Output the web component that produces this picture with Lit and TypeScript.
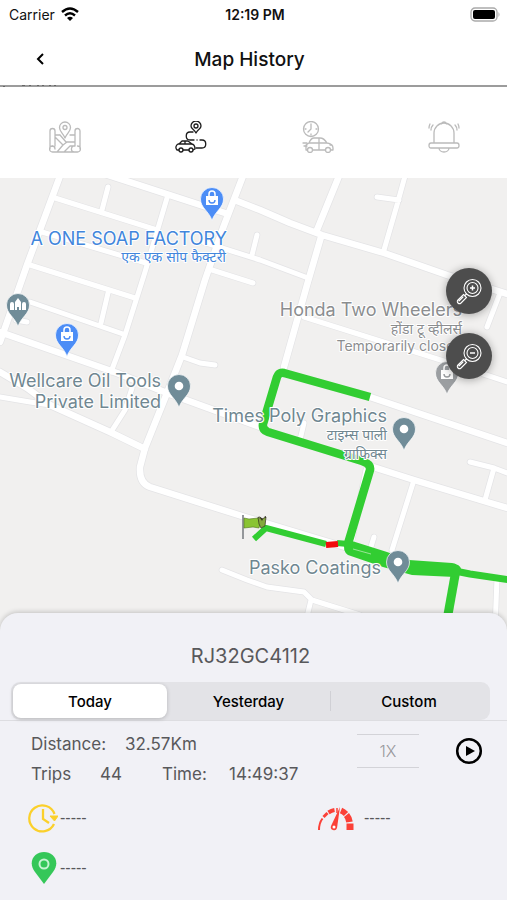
import { LitElement, html, svg, css } from "lit";
import { customElement, state } from "lit/decorators.js";

const minorRoads = [
  "M55 198L157 230", "M42 232L146 263", "M30 265L135 298", "M30 302L123 334",
  "M167 198L145 272L125 335L111 372", "M108 187L102 210", "M203 242L260 260L308 278",
  "M212 270L253 283", "M257 235L252 255", "M183 357L200 363L215 365", "M108 293L101 323",
  "M16 320L27 322", "M0 397L30 402L50 405", "M132 388L125 410L111 432",
  "M405 176L397 205L384 250", "M377 197L399 200", "M304 317L447 362L507 382",
  "M500 293L487 327", "M470 462L494 468L507 473", "M494 468L485 500",
  "M414 480L392 550", "M374 537L370 550", "M304 423L300 440", "M366 470L352 540",
  "M222 570L247 580L267 587L304 592L312 600L360 615", "M311 600L305 625", "M497 578L495 630",
];
const mainRoads = [
  "M60 176L27 265L0 342", "M0 332L117 373L167 393L260 427", "M105 174L228 214",
  "M243 176L223 228L205 280L182 355L167 393L145 448L140 467Q139 483 150 487L245 517",
  "M237 201L260 210L290 223L322 235L384 253L447 275L507 294",
  "M339 176L317 230M321 237L307 285L284 367", "M0 372L27 388L50 405L110 432L145 449",
  "M370 397L507 443", "M370 466L414 480L487 502L507 508", "M245 517L345 547",
];

const bag = svg`<path d="M-6 -3H6V6H-6Z" fill="#fff"/><path d="M-3 -3V-5a3 3 0 0 1 6 0V-3" fill="none" stroke="#fff" stroke-width="1.5"/><path d="M-3 1a3 3 0 0 0 6 0" fill="none" stroke="currentColor" stroke-width="1.4"/>`;
const dot = svg`<circle r="4.3" fill="#fff"/>`;
const towers = svg`<path d="M-8 5V-1a2 2 0 0 1 4 0V5ZM4 5V-1a2 2 0 0 1 4 0V5ZM-3 5V-3L0 -7L3 -3V5H1V2H-1V5Z" fill="#fff"/>`;

const pins = [
  { x: 212, y: 199, color: "#4c8df6", glyph: bag },
  { x: 67, y: 335, color: "#4c8df6", glyph: bag },
  { x: 18, y: 305, color: "#708c98", glyph: towers },
  { x: 179, y: 386, color: "#708c98", glyph: dot },
  { x: 404, y: 429, color: "#708c98", glyph: dot },
  { x: 398, y: 562, color: "#708c98", glyph: dot },
  { x: 447, y: 373, color: "#9b9ea1", glyph: bag },
];

const labels = [
  { x: 227, y: 245, text: "A ONE SOAP FACTORY", cls: "blue" },
  { x: 226, y: 262, text: "एक एक सोप फैक्टरी", cls: "blue hindi" },
  { x: 462, y: 316, text: "Honda Two Wheelers", cls: "grey" },
  { x: 462, y: 334, text: "होंडा टू व्हीलर्स", cls: "grey hindi" },
  { x: 463, y: 351, text: "Temporarily closed", cls: "grey note" },
  { x: 161, y: 387, text: "Wellcare Oil Tools", cls: "slate" },
  { x: 161, y: 408, text: "Private Limited", cls: "slate" },
  { x: 387, y: 422, text: "Times Poly Graphics", cls: "slate" },
  { x: 387, y: 440, text: "टाइम्स पाली", cls: "slate hindi" },
  { x: 387, y: 459, text: "ग्राफिक्स", cls: "slate hindi" },
  { x: 381, y: 574, text: "Pasko Coatings", cls: "slate" },
];

@customElement("history-map")
class HistoryMap extends LitElement {
  static styles = css`
    :host { display: block; position: relative; overflow: hidden; background: #f1f0ef; }
    .canvas { position: absolute; inset: 0; width: 100%; height: 100%; display: block; }
    .road { fill: none; stroke-linecap: round; stroke-linejoin: round; }
    .label {
      font: 18px Inter, "Noto Sans", sans-serif; text-anchor: end;
      stroke: #fff; stroke-width: 2px; stroke-linejoin: round; paint-order: stroke;
    }
    .hindi { font-size: 14px; }
    .note { font-size: 14px; }
    .blue { fill: #4286dc; }
    .grey { fill: #8b8d8f; }
    .slate { fill: #708791; }
    .zoom { position: absolute; top: 90px; right: 15px; display: grid; gap: 19px; }
    button {
      width: 46px; height: 46px; padding: 0; border: 0; border-radius: 50%;
      background: #4d4d4d; box-shadow: 0 1px 8px #0005; display: grid; place-items: center; cursor: pointer;
    }
  `;
  lens(plus: boolean) {
    return html`<svg width="28" height="28" viewBox="0 0 28 28" fill="none" stroke="#fff" stroke-width="1.1">
      <circle cx="17.5" cy="11" r="8.5" /><circle cx="17.5" cy="11" r="5.5" />
      <path d="${plus ? "M15 11h5M17.5 8.5v5" : "M15 11h5"}" stroke-width="1.5" />
      <path d="M11.5 17l-1.500 1.500M8.500 17.500l3 3-5.500 5.500c-2 2-5-1-3-3zM8 20l-4 4" stroke-linecap="round" />
    </svg>`;
  }
  render() {
    const roads = (list: string[], width: number, color: string) =>
      svg`<path class="road" d=${list.join("")} stroke=${color} stroke-width=${width} />`;
    return html`
      <svg class="canvas" viewBox="0 178 507 451" preserveAspectRatio="xMidYMin slice" role="img" aria-label="Route map">
        ${roads(minorRoads, 6.5, "#e4e4e6")} ${roads(mainRoads, 8, "#e4e4e6")}
        ${roads(minorRoads, 5, "#fff")} ${roads(mainRoads, 6.5, "#fff")}
        <g fill="none" stroke="#32cd32" stroke-linejoin="round">
          <path d="M370 397L284 373Q279 372 277 377L263 424Q262 430 268 432L362 461Q371 464 370 470L347 547" stroke-width="8.5" />
          <path d="M254 539L266 528L326 544" stroke-width="6" />
          <path d="M337 543L348 544" stroke-width="6" />
          <path d="M455 571L470 574L510 580" stroke-width="7" />
          <path d="M456 570L447 620" stroke-width="9" />
        </g>
        <path d="M345 541L352 541L387 552L409 560L452 563Q463 565 461 573L455 577L412 575L383 567L348 555Q342 551 345 541Z" fill="#32cd32" />
        <path d="M353 549L371 554" stroke="#c5efc2" stroke-width=".7" />
        <path d="M326 545L338 544" stroke="#f20d0d" stroke-width="6" />
        <path d="M242 515h2v24h-2z" fill="#94979a" />
        <path d="M244 518l5 1 9-1 2 6-1 4-6-1-9 1z" fill="#8ac433" stroke="#50731f" stroke-width=".6" />
        <path d="M258 517l4 2 4-2-1 9-4 2-2-4z" fill="#83a93c" stroke="#33301f" stroke-width=".7" />
        <path d="M259 516l4 3-1 2zM264 517l2-1v2z" fill="#33301f" />
        ${labels.map((l) => svg`<text class="label ${l.cls}" x=${l.x} y=${l.y}>${l.text}</text>`)}
        ${pins.map((p) => svg`<g transform="translate(${p.x} ${p.y})" color=${p.color}>
          <path d="M0 21.500C-3 12 -11.500 9 -11.500 0a11.500 11.500 0 0 1 23 0C11.500 9 3 12 0 21.500Z" fill="currentColor" stroke="#fff" stroke-width=".7" />${p.glyph}</g>`)}
      </svg>
      <div class="zoom">
        <button aria-label="Zoom in">${this.lens(true)}</button>
        <button aria-label="Zoom out">${this.lens(false)}</button>
      </div>`;
  }
}

const tabIcons = [
  { name: "Live map", art: svg`<path d="M6 25V10a2.500 2.500 0 0 0-5 0v18M3.500 25a3 3 0 0 0 0 6H28.500a3 3 0 0 0 0-6M6 28a3 3 0 0 0-3-3M26 25V10a2.500 2.500 0 0 1 5 0V28M26 25a3 3 0 0 0-1 6M6 14h5M21 14h5M6 16l8 8-6 7M11 14l6 7h9M14 24l4-3M15 31l6-6h5"/><path d="M16 17c-2-5-5.500-6-5.500-10.500a5.500 5.500 0 0 1 11 0c0 4.500-3.500 5.500-5.500 10.500z"/><circle cx="16" cy="6.500" r="2"/>` },
  { name: "History", art: svg`<path d="M21 12c-2-4-5-4-5-7a5 5 0 0 1 10 0c0 3-3 3-5 7z"/><circle cx="21" cy="5" r="2"/><path d="M18 11h-3c-5 0-5 8 0 8h4M22 19h.1M25 19h2c5 0 5 8 0 8h-6"/><path d="M4 29H2c-2-2-1-5 1-6h13c3 0 4 2 4 5l-2 1M8 29h6M4 23l3-3h6l4 3M10 20v3"/><circle cx="6" cy="29" r="2"/><circle cx="16" cy="29" r="2"/>` },
  { name: "Trips", art: svg`<circle cx="9" cy="8" r="7.500"/><path d="M9 3v5l-3 3M3 8h1M14 8h1M9 13v1"/><path d="M5.500 29H4v-5l3-2q2-5 5-5h6q4 0 7 5q6 1 6 5v2h-2M10.500 29h13M7 22h18M17 17v11M1 22h4M2 25h3M28 24h2"/><circle cx="8" cy="29" r="2.500"/><circle cx="26" cy="29" r="2.500"/>` },
  { name: "Alerts", art: svg`<path d="M6 22V12a10 10 0 0 1 20 0V22M3 22H29q2 0 2 2.500T29 27H3Q1 27 1 24.500T3 22M11 27a5 4 0 0 0 10 0M13 3q3-4 6 0M5 4Q3 6 3 9M2 3Q1 5 1 7M27 4q2 2 2 5M30 3q1 2 1 4"/>` },
];

@customElement("app-root")
class AppRoot extends LitElement {
  @state() private period = "Today";
  static styles = css`
    :host {
      display: flex; flex-direction: column; min-height: 100vh; background: #fff; color: #111;
      font-family: Inter, "Noto Sans", sans-serif;
    }
    svg { display: block; }
    button { font: inherit; color: inherit; border: 0; padding: 0; background: none; cursor: pointer; }
    .status {
      height: 28px; padding: 0 6px 0 9px; font-size: 14px;
      display: grid; grid-template-columns: 1fr auto 1fr; align-items: center;
    }
    .carrier { display: flex; align-items: center; gap: 6px; }
    .clock { font-weight: 600; }
    .battery { justify-self: end; }
    .nav {
      height: 57px; padding: 7px 24px 0; box-sizing: border-box;
      display: grid; grid-template-columns: 32px 1fr 40px; align-items: center;
    }
    .back { height: 32px; display: grid; place-items: center; padding-bottom: 3px; }
    h1 { margin: 0; font-size: 19px; font-weight: 500; text-align: center; line-height: 28px; }
    .rule { height: 2px; background: #9c9c9c; }
    .tabs { height: 91px; display: grid; grid-template-columns: repeat(4, 1fr); padding-left: 2px; }
    .tab { display: grid; place-items: center; color: #bbb; padding-top: 8px; }
    .tab.current { color: #1c1c1c; }
    history-map { flex: 1; min-height: 300px; }
    .panel {
      position: relative; margin-top: -16px; min-height: 287px; box-sizing: border-box; padding-top: 28px;
      border-radius: 18px 18px 0 0; background: #f1f1f6; box-shadow: 0 -1px 5px #0003; color: #58585b;
    }
    h2 { margin: 0; padding-right: 6px; font-size: 20px; font-weight: 400; line-height: 30px; text-align: center; }
    .periods { border-bottom: 1px solid #dddde1; padding: 0 17px 0 11px; margin-top: 11px; }
    .segments { height: 38px; padding: 2px; box-sizing: border-box; border-radius: 9px; background: #e3e3e7; display: grid; grid-template-columns: 154fr 163fr 158fr; }
    .segment { border-radius: 8px; font-size: 15px; font-weight: 500; color: #000; position: relative; }
    .segment.selected { background: #fff; box-shadow: 0 1px 4px #0003; }
    .segment.split::before { content: ""; position: absolute; left: 0; top: 7px; bottom: 7px; width: 1px; background: #d0d0d5; }
    .summary { display: flex; align-items: flex-start; padding: 8px 24px 0 31px; }
    .figures { flex: 1; font-size: 17px; line-height: 30px; }
    .line { display: grid; grid-template-columns: 69px 62px 67px 1fr; }
    .line.wide { grid-template-columns: 94px 1fr; }
    .speed {
      appearance: none; width: 62px; height: 34px; margin: 5px 36px 0 0; border: solid #d3d3d8; border-width: 1px 0;
      background: none; border-radius: 0; padding: 0; color: #98989c; font: 300 16px Inter, sans-serif; text-align: center; text-align-last: center;
    }
    .play { margin-top: 8px; }
    .readings { display: grid; grid-template-columns: 289px 1fr; padding: 11px 28px 0; row-gap: 14px; font: 16px "Liberation Sans", sans-serif; }
    .reading { height: 36px; display: flex; align-items: center; gap: 2px; }
    .reading.spaced { gap: 10px; }
  `;
  render() {
    return html`
      <div class="status">
        <span class="carrier">Carrier
          <svg width="18" height="14" viewBox="0 0 18 14" fill="none" stroke="#000" stroke-width="2.4">
            <path d="M1 5Q9-2 17 5M4 8.500q5-4.500 10 0" /><path d="M6 11q3-2.500 6 0l-3 3z" fill="#000" stroke="none" />
          </svg></span>
        <span class="clock">12:19 PM</span>
        <svg class="battery" width="31" height="15" viewBox="0 0 31 15">
          <rect x="1" y="1" width="26" height="13" rx="4" fill="#fff" stroke="#aaa" stroke-width="1.3" />
          <rect x="3" y="3" width="22" height="9" rx="2" /><path d="M28.500 5q2 2.500 0 5z" fill="#aaa" />
        </svg>
      </div>
      <header class="nav">
        <button class="back" aria-label="Back"><svg width="8" height="12" viewBox="0 0 8 12" fill="none" stroke="#000" stroke-width="2"><path d="M7 1L2 6l5 5" /></svg></button>
        <h1>Map History</h1>
      </header>
      <div class="rule"><svg width="60" height="2" fill="#666"><path d="M3 1h2v1h-2zM22 0h3v1h-3zM29 0h2v1h-2zM37 0h2v1h-2zM42 0h2v1h-2zM49 0h2v1h-2zM54 0h2v1h-2z" /></svg></div>
      <nav class="tabs">
        ${tabIcons.map((t, i) => html`<button class="tab ${i === 1 ? "current" : ""}" aria-label=${t.name}>
          <svg width="32" height="32" viewBox="0 0 32 32" fill="none" stroke="currentColor" stroke-width="1.3" stroke-linecap="round" stroke-linejoin="round">${t.art}</svg></button>`)}
      </nav>
      <history-map></history-map>
      <section class="panel">
        <h2>RJ32GC4112</h2>
        <div class="periods"><div class="segments">
          ${["Today", "Yesterday", "Custom"].map((p) => html`<button
            class="segment ${p === this.period ? "selected" : ""} ${p === "Custom" ? "split" : ""}"
            aria-pressed=${p === this.period} @click=${() => (this.period = p)}>${p}</button>`)}
        </div></div>
        <div class="summary">
          <div class="figures">
            <div class="line wide"><span>Distance:</span><span>32.57Km</span></div>
            <div class="line"><span>Trips</span><span>44</span><span>Time:</span><span>14:49:37</span></div>
          </div>
          <select class="speed" aria-label="Playback speed"><option>1X</option><option>2X</option><option>4X</option></select>
          <button class="play" aria-label="Play"><svg width="28" height="28" viewBox="0 0 28 28"><circle cx="14" cy="14" r="11.8" fill="none" stroke="#000" stroke-width="2.5" /><path d="M11 9l9 5-9 5z" /></svg></button>
        </div>
        <div class="readings">
          <div class="reading"><svg width="30" height="30" viewBox="0 0 30 30" fill="none" stroke="#fbd02b" stroke-width="2.3">
            <path d="M26.500 11A13 13 0 1 0 26 21M15 6v10l6 4" /><path d="M22 13h8l-3.500 5z" fill="#fbd02b" stroke-width="1" /></svg><span>-----</span></div>
          <div class="reading spaced"><svg width="37" height="26" viewBox="0 0 37 26" fill="none" stroke="#fb4138">
            <path d="M2 25Q2 18 5.500 13.500" stroke-width="2" /><path d="M6.500 12l4-4" stroke-width="3" /><path d="M11.500 7.500q3-2 6-2.500" stroke-width="4" />
            <path d="M24 5.500q2.500 1 5 3.500" stroke-width="6" /><path d="M29.500 10q2.500 3 3 7" stroke-width="6.500" /><path d="M33 18.500v6.500" stroke-width="7" />
            <path d="M23 2L14 21a3 3 0 0 0 6 2z" fill="#fb4138" stroke="none" /><circle cx="17" cy="22" r="1.5" fill="#fff" stroke="none" /><path d="M20 8V3" stroke-width="1.5" /></svg><span>-----</span></div>
          <div class="reading"><svg width="30" height="32" viewBox="0 0 30 32"><path d="M16 32L7 20C-1 9 7 0 16 0s17 9 9 20z" fill="#35c759" /><circle cx="16" cy="12" r="4.5" fill="none" stroke="#c6f3d2" stroke-width="2" /></svg><span>-----</span></div>
        </div>
      </section>`;
  }
}
